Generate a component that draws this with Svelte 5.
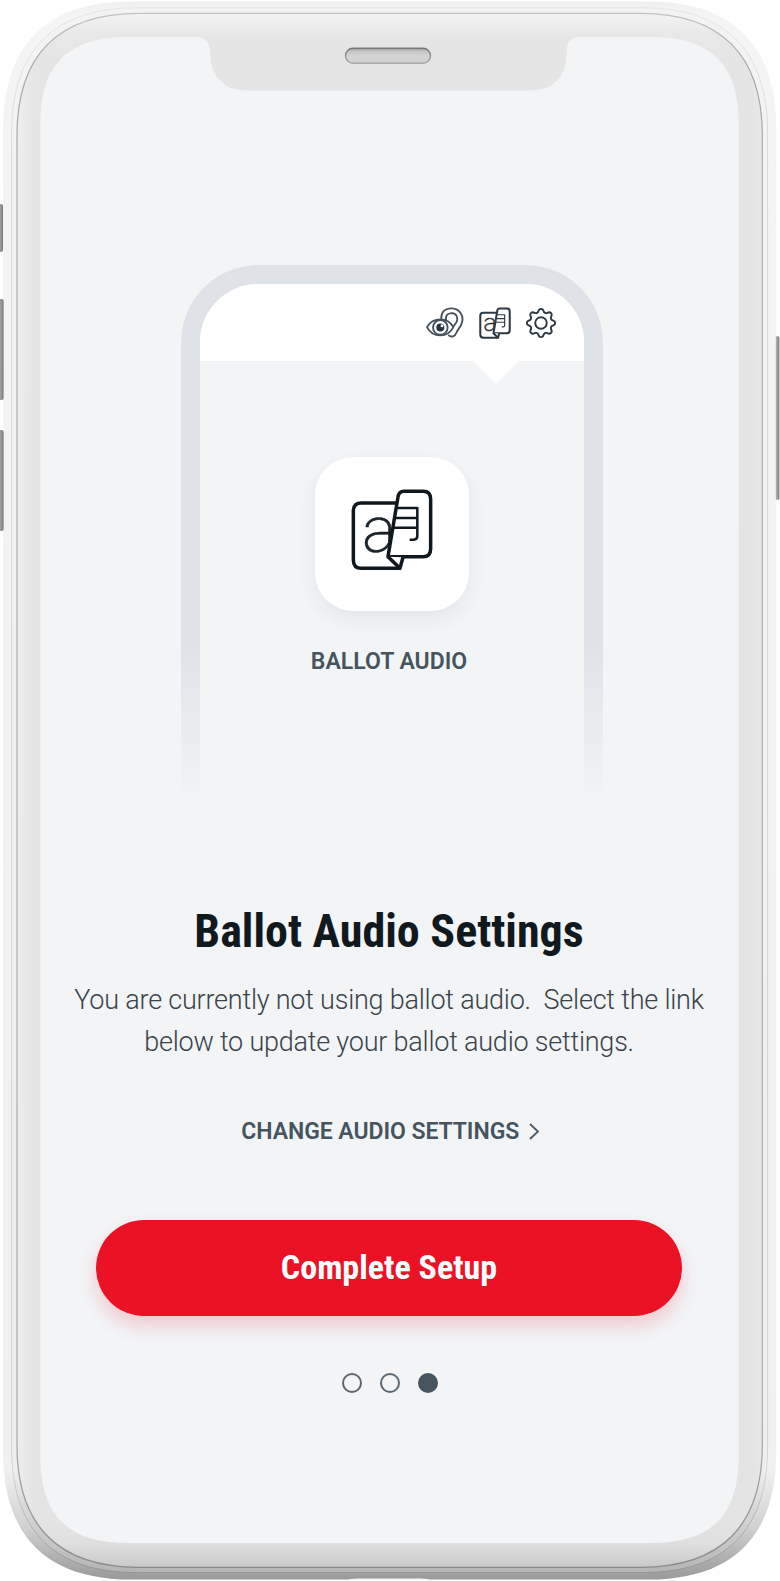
<script>
  // Rounded rectangle with continuous-curvature corners.
  function squircle(x0, y0, x1, y1, e, k) {
    const h = e * (1 - k);
    return `M${x0} ${y0 + e}C${x0} ${y0 + h} ${x0 + h} ${y0} ${x0 + e} ${y0}H${x1 - e}C${x1 - h} ${y0} ${x1} ${y0 + h} ${x1} ${y0 + e}V${y1 - e}C${x1} ${y1 - h} ${x1 - h} ${y1} ${x1 - e} ${y1}H${x0 + e}C${x0 + h} ${y1} ${x0} ${y1 - h} ${x0} ${y1 - e}Z`;
  }
  const body = squircle(3, 1.5, 776.3, 1579.6, 128, 0.66);
  const rim = squircle(11.6, 7.8, 767.6, 1572.6, 125, 0.66);
  const seam = squircle(17, 13.3, 762.3, 1567.3, 122, 0.66);
  const display = squircle(40.3, 37, 738.7, 1543, 88, 0.69);

  const steps = [false, false, true];

  // Scalloped gear outline.
  const gear = (() => {
    let d = '';
    for (let i = 0; i <= 96; i++) {
      const a = (i / 96) * Math.PI * 2;
      const c = Math.cos(8 * a);
      const r = 39 + 5 * Math.sign(c) * Math.pow(Math.abs(c), 0.6);
      d += `${i ? 'L' : 'M'}${(50 + r * Math.sin(a)).toFixed(2)} ${(50 - r * Math.cos(a)).toFixed(2)}`;
    }
    return d + 'Z';
  })();
</script>

{#snippet ballot(w, thin, glyph)}
  <g fill="none" stroke-width={w} stroke-linejoin="round">
    <path d="M292 190H184Q160 190 160 214V361Q160 386 184 386H300" />
    <text class="letter" x="186" y="336" stroke-width={glyph}>a</text>
    <path class="white" d="M312 155H370Q392 155 392 179V327Q392 351 370 351H264L294 172Q297 155 312 155Z" />
    <path class="white" d="M264 351L300 386L309 353" />
    <path d="M290 205H352V289Q352 300 341 300H329M286 235H352M282 264H352" stroke-width={thin} />
  </g>
{/snippet}

<div class="device">
  <svg class="shell" viewBox="0 0 780 1581" aria-hidden="true">
    <defs>
      <linearGradient id="bodyFill" gradientUnits="userSpaceOnUse" x1="0" y1="0" x2="0" y2="1581">
        <stop offset="0" stop-color="#efefef" /><stop offset=".01" stop-color="#f5f5f5" />
        <stop offset=".06" stop-color="#f4f4f4" /><stop offset=".93" stop-color="#f0f0f0" />
        <stop offset=".965" stop-color="#d2d2d2" /><stop offset="1" stop-color="#989898" />
      </linearGradient>
      <linearGradient id="rimFill" gradientUnits="userSpaceOnUse" x1="0" y1="0" x2="0" y2="1581">
        <stop offset="0" stop-color="#f3f3f3" /><stop offset=".93" stop-color="#eee" />
        <stop offset="1" stop-color="#b0b0b0" />
      </linearGradient>
      <linearGradient id="rimLine" gradientUnits="userSpaceOnUse" x1="0" y1="0" x2="0" y2="1581">
        <stop offset="0" stop-color="#e6e6e6" /><stop offset=".1" stop-color="#d9d9d9" />
        <stop offset=".93" stop-color="#d4d4d4" /><stop offset="1" stop-color="#909090" />
      </linearGradient>
      <linearGradient id="seamLine" gradientUnits="userSpaceOnUse" x1="0" y1="0" x2="0" y2="1581">
        <stop offset="0" stop-color="#c9c9c9" /><stop offset=".04" stop-color="#a8a8a8" />
        <stop offset=".12" stop-color="#b4b4b4" /><stop offset=".9" stop-color="#b0b0b0" />
        <stop offset="1" stop-color="#858585" />
      </linearGradient>
      <linearGradient id="bezel" gradientUnits="userSpaceOnUse" x1="0" y1="13" x2="0" y2="1567">
        <stop offset="0" stop-color="#f3f3f3" /><stop offset=".014" stop-color="#e8e8e8" />
        <stop offset=".03" stop-color="#e5e5e5" /><stop offset=".97" stop-color="#e4e4e4" />
        <stop offset=".985" stop-color="#dfdfdf" /><stop offset="1" stop-color="#c9c9c9" />
      </linearGradient>
      <linearGradient id="sideGlow" gradientUnits="userSpaceOnUse" x1="17" y1="0" x2="762" y2="0">
        <stop offset="0" stop-color="#fff" stop-opacity=".35" /><stop offset=".025" stop-color="#fff" stop-opacity="0" />
        <stop offset=".985" stop-color="#fff" stop-opacity="0" /><stop offset="1" stop-color="#fff" stop-opacity=".12" />
      </linearGradient>
      <linearGradient id="key" x1="0" y1="0" x2="1" y2="0">
        <stop offset="0" stop-color="#b5b5b5" /><stop offset=".55" stop-color="#999" /><stop offset="1" stop-color="#777" />
      </linearGradient>
      <linearGradient id="speaker" x1="0" y1="0" x2="0" y2="1">
        <stop offset="0" stop-color="#9b9b9b" /><stop offset=".2" stop-color="#c5c5c5" />
        <stop offset=".5" stop-color="#d4d4d4" /><stop offset="1" stop-color="#cfcfcf" />
      </linearGradient>
      <linearGradient id="speakerEdge" x1="0" y1="0" x2="0" y2="1">
        <stop offset="0" stop-color="#777" /><stop offset="1" stop-color="#aaa" />
      </linearGradient>
    </defs>
    <path d={body} fill="url(#bodyFill)" />
    <g fill="url(#key)">
      <rect x="-2" y="204" width="5" height="48" rx="2" />
      <rect x="-2" y="299" width="5.6" height="101" rx="2" />
      <rect x="-2" y="430" width="5.6" height="101" rx="2" />
      <rect x="775.8" y="336" width="3.6" height="164" rx="1.8" />
    </g>
    <path d="M346 1580.5Q350 1578.4 358 1578.4H420Q428 1578.4 432 1580.5Z" fill="#fafafa" />
    <path d={rim} fill="url(#rimFill)" stroke="url(#rimLine)" />
    <path d={seam} fill="url(#bezel)" />
    <path d={seam} fill="url(#sideGlow)" stroke="url(#seamLine)" stroke-width="1.3" />
    <path d={display} fill="#f2f4f6" />
    <path d="M196 36.8C206 37 210.3 43 210.3 54C210.3 76 224 90.5 246 90.5H531C553 90.5 566.5 76 566.5 54C566.5 43 570 37 580 36.8Z" fill="#e5e5e5" />
    <rect x="345.5" y="48.3" width="85" height="15" rx="7.5" fill="url(#speaker)" stroke="url(#speakerEdge)" stroke-width="1.4" />
  </svg>

  <main>
    <section class="preview">
      <div class="frame"></div>
      <header>
        <svg class="senses" viewBox="0 0 114 94" aria-hidden="true">
          <g fill="none" stroke="#46525b" stroke-width="5.5" stroke-linecap="round">
            <path d="M46 37C44 12 60 3 77 4C101 5 114 25 108 46C104 61 96 65 91 77C87 89 77 91 69 85" />
            <path d="M60 38C58 22 68 18 78 18C92 19 97 32 92 44C89 51 83 54 79 64" />
            <path class="white" d="M3 60C12 44 28 37 43 37S73 44 82 60C73 78 58 85 43 85S12 78 3 60Z" />
            <circle cx="43" cy="61" r="22" />
          </g>
          <circle cx="43" cy="61" r="12" fill="#27323a" /><circle cx="48" cy="56" r="4.5" fill="#fff" />
        </svg>
        <svg class="mini" viewBox="150 145 252 250" aria-hidden="true">{@render ballot(16, 9, 4)}</svg>
        <svg class="gear" viewBox="0 0 100 100" aria-hidden="true">
          <g fill="none" stroke="#2d3942" stroke-width="6" stroke-linejoin="round"><path d={gear} /><circle cx="50" cy="50" r="18" /></g>
        </svg>
        <i class="pointer"></i>
      </header>
      <div class="tile">
        <svg viewBox="150 145 252 250" aria-hidden="true">{@render ballot(10.5, 7.5, 1.5)}</svg>
      </div>
      <p class="caption">BALLOT AUDIO</p>
    </section>

    <h1>Ballot Audio Settings</h1>
    <p class="copy">You are currently not using ballot audio.&nbsp; Select the link<br />below to update your ballot audio settings.</p>
    <a class="link" href="#audio">
      <span>CHANGE AUDIO SETTINGS</span>
      <svg viewBox="0 0 10 17" aria-hidden="true"><path d="M1 1L9 8.5L1 16" fill="none" stroke="#4a5963" stroke-width="1.8" /></svg>
    </a>
    <button>Complete Setup</button>
    <div class="dots">
      {#each steps as on}<i class:on></i>{/each}
    </div>
  </main>
</div>

<style>
  :global(body) { margin: 0; background: #fff; }
  .device {
    position: relative;
    width: 780px;
    height: 1581px;
    overflow: hidden;
    font-family: Roboto, "Liberation Sans", sans-serif;
    color: #46545e;
  }
  .shell { position: absolute; inset: 0; width: 780px; height: 1581px; }
  .white { fill: #fff; }
  main {
    position: relative;
    box-sizing: border-box;
    height: 1581px;
    padding: 265px 42px 0 40px;
    display: flex;
    flex-direction: column;
    align-items: center;
  }
  .preview {
    position: relative;
    box-sizing: border-box;
    width: 422px;
    height: 536px;
    margin-left: 6px;
    padding: 19px 19px 0;
    display: flex;
    flex-direction: column;
    align-items: center;
    flex: none;
  }
  .frame {
    position: absolute;
    inset: 0;
    box-sizing: border-box;
    border: 19.5px solid #dfe3e8;
    border-bottom: 0;
    border-radius: 77px 77px 0 0;
    -webkit-mask-image: linear-gradient(#000 385px, transparent 536px);
    mask-image: linear-gradient(#000 385px, transparent 536px);
  }
  header {
    position: relative;
    box-sizing: border-box;
    width: 384px;
    height: 77px;
    padding: 22px 27px 0 0;
    border-radius: 58px 58px 0 0;
    background: #fff;
    display: flex;
    justify-content: flex-end;
    align-items: flex-start;
    flex: none;
  }
  header svg { flex: none; }
  .senses { width: 38px; height: 31.5px; margin: 1px 15px 0 0; }
  .mini { width: 32px; height: 32px; margin: 1px 14px 0 0; }
  .mini g { stroke: #2d3942; }
  .gear { width: 32px; height: 32px; margin-top: 1px; }
  .pointer {
    position: absolute;
    left: 272px;
    top: 76px;
    width: 48px;
    height: 24px;
    background: #fff;
    clip-path: polygon(0 0, 100% 0, 50% 100%);
  }
  .tile {
    width: 154px;
    height: 154px;
    margin-top: 96px;
    border-radius: 38px;
    background: #fff;
    box-shadow: 0 8px 20px rgba(40, 50, 60, .07);
    display: flex;
    justify-content: center;
    flex: none;
  }
  .tile svg { width: 84px; height: 83.3px; margin-top: 31.3px; }
  .tile g { stroke: #11181d; }
  .letter { font-family: Roboto, sans-serif; font-size: 194px; font-weight: 200; fill: #1a2329; }
  .caption { margin: 37px 0 0 -6px; font-size: 23px; line-height: 27px; font-weight: 600; white-space: nowrap; }
  h1 { margin: 102px 0 0; font-size: 46px; line-height: 56px; font-weight: 700; font-stretch: 75%; color: #10191e; white-space: nowrap; flex: none; }
  .copy { margin: 19.5px 0 0; font-size: 27px; line-height: 42.5px; letter-spacing: -.22px; font-weight: 300; color: #39434a; text-align: center; white-space: nowrap; flex: none; }
  .link { margin: 54.5px 0 0 2px; display: flex; align-items: center; gap: 9.5px; font-size: 23px; letter-spacing: -.06px; line-height: 27px; font-weight: 600; color: #46545e; text-decoration: none; white-space: nowrap; flex: none; }
  .link svg { width: 10px; height: 17px; }
  button {
    width: 586px;
    height: 96px;
    margin: 75px 0 0;
    padding: 0 0 2px;
    border: 0;
    border-radius: 48px;
    background: #eb1226;
    box-shadow: 0 10px 18px rgba(235, 18, 38, .18);
    color: #fff;
    font-family: inherit;
    font-size: 34px;
    font-weight: 700;
    font-stretch: 75%;
    white-space: nowrap;
    flex: none;
  }
  .dots { margin: 57px 0 0 2px; display: flex; gap: 18.4px; flex: none; }
  .dots i { box-sizing: border-box; width: 20px; height: 20px; border: 2px solid #5d6972; border-radius: 50%; }
  .dots .on { background: #46545e; border-color: #46545e; }
</style>
